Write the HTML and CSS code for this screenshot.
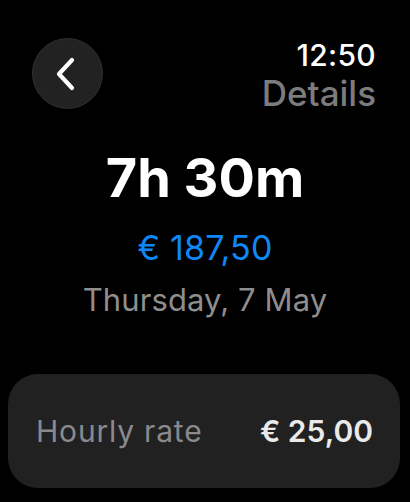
FILE: index.html
```html
<!DOCTYPE html>
<html>
<head>
<meta charset="utf-8">
<link rel="stylesheet" href="styles.css">
</head>
<body>
<div class="screen">
  <header class="top">
    <button class="back" aria-label="Back">
      <svg width="22" height="34" viewBox="0 0 22 34"><path d="M17 3 L4 17 L17 31" fill="none" stroke="#fff" stroke-width="4.2" stroke-linecap="round" stroke-linejoin="round"/></svg>
    </button>
    <div class="titles">
      <div class="time">12:50</div>
      <div class="title">Details</div>
    </div>
  </header>
  <main class="summary">
    <div class="duration">7h 30m</div>
    <div class="amount">€ 187,50</div>
    <div class="date">Thursday, 7 May</div>
  </main>
  <section class="card">
    <span class="label">Hourly rate</span>
    <span class="value">€ 25,00</span>
  </section>
</div>
</body>
</html>
```
FILE: styles.css
```css
* { box-sizing: border-box; }
html, body { margin: 0; padding: 0; background: #000; }
body { font-family: Inter, "Noto Sans", sans-serif; color: #fff; }
.screen { width: 410px; height: 502px; display: flex; flex-direction: column; }
.top { display: flex; justify-content: space-between; align-items: flex-start; padding: 38px 34px 0 32px; }
.back { width: 71px; height: 71px; border-radius: 50%; background: #222; border: 1.5px solid #303030; display: flex; align-items: center; justify-content: center; padding: 0; padding-right: 4px; margin: 0; }
.titles { display: flex; flex-direction: column; align-items: flex-end; }
.time { font-size: 30px; font-weight: 500; line-height: 34px; letter-spacing: 0.3px; }
.title { font-size: 35px; font-weight: 500; color: #7c7c7e; line-height: 40px; margin-top: 1px; }
.summary { display: flex; flex-direction: column; align-items: center; margin-top: 33px; }
.duration { font-size: 54px; font-weight: 700; line-height: 64px; }
.amount { font-size: 34px; font-weight: 400; color: #0f88f7; line-height: 40px; margin-top: 18px; letter-spacing: 0.2px; }
.date { font-size: 31px; font-weight: 400; color: #8e8e8e; line-height: 40px; margin-top: 12px; letter-spacing: 0.1px; }
.card { margin: auto 10px 14px 8px; height: 114px; border-radius: 30px; background: #212121; display: flex; align-items: center; justify-content: space-between; padding: 0 27px 0 28px; }
.label { font-size: 30px; color: #8a8a8e; letter-spacing: 0.8px; }
.value { font-size: 30px; font-weight: 600; color: #eaeaea; }
```
